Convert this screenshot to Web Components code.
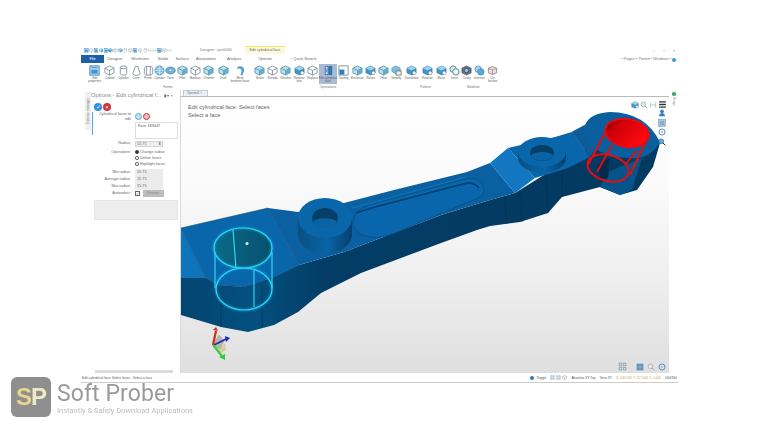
<!DOCTYPE html>
<html>
<head>
<meta charset="utf-8">
<title>Edit cylindrical face</title>
<style>
html, body { margin: 0; padding: 0; background: #fff; }
body { width: 761px; height: 427px; overflow: hidden; font-family: "Liberation Sans", Arial, sans-serif; position: relative; }
</style>
</head>
<body>
<app-window>
  <title-bar></title-bar>
  <ribbon-tabs></ribbon-tabs>
  <ribbon-bar>
    <ribbon-group label="Forms" style="--pad:3px">
      <ribbon-tool w="15.5" icon="sheet">Edit<br>properties</ribbon-tool>
      <ribbon-tool w="14.5" icon="cube">Cuboid</ribbon-tool>
      <ribbon-tool w="13" icon="cyl">Cylinder</ribbon-tool>
      <ribbon-tool w="12" icon="cone">Cone</ribbon-tool>
      <ribbon-tool w="12" icon="prism">Prism</ribbon-tool>
      <ribbon-tool w="11" icon="ball">Cylinder</ribbon-tool>
      <ribbon-tool w="11" icon="torus">Torus</ribbon-tool>
      <ribbon-tool w="12.5" icon="tcube">Fillet</ribbon-tool>
      <ribbon-tool w="13.5" icon="cube">Boolean</ribbon-tool>
      <ribbon-tool w="13.5" icon="tcube">Chamfer</ribbon-tool>
      <ribbon-tool w="15.5" icon="tcube">Draft</ribbon-tool>
      <ribbon-tool w="18" icon="wizard">Mesh<br>between faces</ribbon-tool>
    </ribbon-group>
    <ribbon-group label="Operations" style="--pad:4px">
      <ribbon-tool w="13.5" icon="tcube">Shave</ribbon-tool>
      <ribbon-tool w="12.5" icon="cube">Extrude</ribbon-tool>
      <ribbon-tool w="13.5" icon="tcube">Revolve</ribbon-tool>
      <ribbon-tool w="13.5" icon="bcube">Remove<br>face</ribbon-tool>
      <ribbon-tool w="13" icon="cube">Replace</ribbon-tool>
      <ribbon-tool w="18" icon="edit" active>Edit cylindrical<br>face</ribbon-tool>
      <ribbon-tool w="13.5" icon="scale">Scaling</ribbon-tool>
      <ribbon-tool w="14" icon="tcube">Enclosure</ribbon-tool>
      <ribbon-tool w="12.5" icon="bcube">Rotate</ribbon-tool>
      <ribbon-tool w="12.5" icon="tcube">Offset</ribbon-tool>
      <ribbon-tool w="13.5" icon="simp">Simplify</ribbon-tool>
    </ribbon-group>
    <ribbon-group label="Pattern">
      <ribbon-tool w="17" icon="bcube">Translation</ribbon-tool>
      <ribbon-tool w="14.5" icon="bcube">Rotation</ribbon-tool>
      <ribbon-tool w="13.5" icon="bcube">Mirror</ribbon-tool>
    </ribbon-group>
    <ribbon-group label="Boolean">
      <ribbon-tool w="12.5" icon="unite">Unite</ribbon-tool>
      <ribbon-tool w="12.5" icon="cavity">Cavity</ribbon-tool>
      <ribbon-tool w="13" icon="inter">Intersect</ribbon-tool>
      <ribbon-tool w="13" icon="cut">Cut<br>Section</ribbon-tool>
    </ribbon-group>
  </ribbon-bar>
  <work-area>
    <options-panel slot="left"></options-panel>
    <scene-view slot="main"></scene-view>
    <side-strip slot="right"></side-strip>
  </work-area>
  <status-bar></status-bar>
</app-window>
<soft-mark></soft-mark>

<script>
const ICONS = {
  sheet: '<rect x="1" y="1" width="10" height="10" fill="#cfe3f3" stroke="#2c7fc0" stroke-width="1"/><rect x="2.5" y="5" width="7" height="4.5" fill="#3f97d6"/><path d="M2.5 3h7" stroke="#2c7fc0"/>',
  cube: '<path d="M6 1 11 3.5V8.5L6 11 1 8.5V3.5ZM1 3.5 6 6 11 3.5M6 6V11" fill="#fff" stroke="#66808f" stroke-width=".8"/>',
  tcube: '<path d="M6 1 11 3.5V8.5L6 11 1 8.5V3.5Z" fill="#bfe0e8" stroke="#3f8aa5" stroke-width=".8"/><path d="M1 3.5 6 6 11 3.5M6 6V11" fill="none" stroke="#3f8aa5" stroke-width=".8"/><path d="M6 6 11 3.5V8.5L6 11Z" fill="#64aecb"/>',
  bcube: '<path d="M6 1 11 3.5V8.5L6 11 1 8.5V3.5Z" fill="#3f97c9" stroke="#2b6f95" stroke-width=".6"/><path d="M1 3.5 6 6 11 3.5 6 1Z" fill="#9fd0ea"/><circle cx="9" cy="8.6" r="2" fill="#fff" stroke="#557" stroke-width=".5"/>',
  cyl: '<path d="M2.5 2.5V9.5A3.5 1.5 0 0 0 9.500 9.500V2.500" fill="#fff" stroke="#66808f" stroke-width=".8"/><ellipse cx="6" cy="2.500" rx="3.500" ry="1.500" fill="#fff" stroke="#66808f" stroke-width=".8"/>',
  cone: '<path d="M4.500 1.500H7.500L10 9.500A4 1.700 0 0 1 2 9.500Z" fill="#fff" stroke="#66808f" stroke-width=".8"/>',
  prism: '<path d="M3 1.500H9L10.500 3.500V9.500L9 11H3L1.500 9.500V3.500ZM4 1.500V11M8 1.500V11" fill="#fff" stroke="#66808f" stroke-width=".8"/>',
  ball: '<circle cx="6" cy="6" r="5" fill="#7fc0e6" stroke="#3a7ea8" stroke-width=".7"/><path d="M1 6H11M6 1V11M2.500 3C5 4.500 7 4.500 9.500 3M2.500 9C5 7.500 7 7.500 9.500 9" fill="none" stroke="#e8f4fb" stroke-width=".6"/>',
  torus: '<ellipse cx="6" cy="6" rx="5.300" ry="3.800" fill="#6fb0d8" stroke="#4d7f9e" stroke-width=".7"/><ellipse cx="6" cy="5.600" rx="2.200" ry="1.200" fill="#dfeef6" stroke="#4d7f9e" stroke-width=".5"/>',
  wizard: '<path d="M3 2C6 .5 10 2 10 5.500 10 8 8.500 9 8 11.500L6 11C6.500 8.500 7.500 7 7 5.500 6.500 4 5 3.500 3 4Z" fill="#4f9fcb"/><path d="M2 3.500 4 2.500" stroke="#667" stroke-width=".7"/>',
  edit: '<path d="M2.500 1.500H5.500V10.500H2.500Z" fill="#d8e8f4" stroke="#1f5f93" stroke-width=".8"/><path d="M6.500 1.500H9.500V10.500H6.500Z" fill="#2f7fc0" stroke="#1f5f93" stroke-width=".8"/><path d="M4 4V8" stroke="#1f5f93" stroke-width=".8"/>',
  scale: '<rect x="1" y="1" width="10" height="10" fill="#fff" stroke="#5d7685" stroke-width=".8"/><rect x="1.500" y="5" width="5.500" height="5.500" fill="#2b7fbe"/>',
  simp: '<path d="M5 1 10 3.500V7L5 9.500 1 7V3.500Z" fill="#7fbfe0" stroke="#3c83aa" stroke-width=".7"/><rect x="5.500" y="6.500" width="5.500" height="4.500" fill="#eee" stroke="#555" stroke-width=".7"/>',
  unite: '<circle cx="4.500" cy="4.500" r="3.500" fill="#d4ecec" stroke="#3d7f82" stroke-width=".9"/><circle cx="7.500" cy="7.500" r="3.500" fill="#e8f5f5" stroke="#3d7f82" stroke-width=".9"/>',
  cavity: '<path d="M6 1 11 3.500V8.500L6 11 1 8.500V3.500Z" fill="#5d7485" stroke="#3b4b57" stroke-width=".7"/><circle cx="6" cy="6" r="2.300" fill="#9fc0d8" stroke="#26343e" stroke-width=".6"/>',
  inter: '<circle cx="4.500" cy="4.500" r="3.500" fill="#a8d3ea" stroke="#4689b0" stroke-width=".8"/><circle cx="7.500" cy="7.500" r="3.500" fill="#5ea9d5" stroke="#4689b0" stroke-width=".8"/>',
  cut: '<path d="M6 1.500 10.500 3.500V8.500L6 10.500 1.500 8.500V3.500Z" fill="#e9dfdc" stroke="#777" stroke-width=".8"/><path d="M1.500 3.500 6 5.500 10.500 3.500M6 5.500V10.500" fill="none" stroke="#a55" stroke-width=".6"/>',
  hbar: '<path d="M1.500 2.500H10.500M1.500 6H10.500M1.500 9.500H10.500" stroke="#333" stroke-width="1.800"/>',
  frame: '<path d="M2 2V10M10 2V10M2 6H10" stroke="#9aa6ad" stroke-width=".9" fill="none"/>',
  grid: '<path d="M1.500 1.500H5V5H1.500ZM7 1.500H10.500V5H7ZM1.500 7H5V10.500H1.500ZM7 7H10.500V10.500H7Z" fill="none" stroke="#7d97a8" stroke-width="1"/>',
  view: '<rect x="1" y="1" width="10" height="10" fill="#5f93bd"/><path d="M1 6H11M6 1V11" stroke="#a9cbe4" stroke-width=".7"/>',
  person: '<circle cx="6" cy="3.500" r="2.800" fill="#2f7fc0"/><path d="M1.500 11C1.500 7 4 6 6 6S10.500 7 10.500 11Z" fill="#2f7fc0"/>',
  tile: '<rect x="1" y="1" width="10" height="10" fill="#a9c6dc" stroke="#5a8cb2" stroke-width=".8"/><path d="M3 4H9M3 6H9M3 8H9" stroke="#4f82a8" stroke-width=".8"/>',
  zoomv: '<circle cx="5" cy="5" r="3.500" fill="#6ea5cf" stroke="#2b6c9f" stroke-width="1.100"/><path d="M7.500 7.500 11 11" stroke="#222" stroke-width="1.400"/>',
  mag: '<circle cx="5" cy="5" r="3.500" fill="#e4e8ea" stroke="#9aa7ad" stroke-width="1.100"/><path d="M7.500 7.500 11 11" stroke="#8c979c" stroke-width="1.300"/>',
  rot: '<circle cx="6" cy="6" r="4.500" fill="none" stroke="#5c93bd" stroke-width="1.500"/><circle cx="6" cy="6" r="1.800" fill="#a9c9df"/>'
};

class RIcon extends HTMLElement {
  connectedCallback() {
    const s = this.getAttribute('size') || 12;
    const shadow = this.shadowRoot || this.attachShadow({ mode: 'open' });
    shadow.innerHTML = `<style>:host{display:block;width:${s}px;height:${s}px}svg{display:block;width:100%;height:100%}</style>
      <svg viewBox="0 0 12 12">${ICONS[this.getAttribute('name')] || ''}</svg>`;
  }
}
customElements.define('r-icon', RIcon);

class AppWindow extends HTMLElement {
  constructor() {
    super();
    this.attachShadow({ mode: 'open' }).innerHTML = `<style>
      :host{display:flex;flex-direction:column;width:597px;height:337px;margin:46px 0 0 81px;background:#fff;color:#555;filter:blur(.5px);font:4px "Liberation Sans",Arial,sans-serif}
    </style><slot></slot>`;
  }
}
customElements.define('app-window', AppWindow);

class TitleBar extends HTMLElement {
  constructor() {
    super();
    const quick = ['sheet','cube','sheet','tcube','sheet','bcube','cube','tcube','cyl','cube','sheet','cube','cyl','frame','frame','sheet','cube','frame'];
    this.attachShadow({ mode: 'open' }).innerHTML = `<style>
      :host{display:flex;align-items:center;height:9px;position:relative}
      .q{display:flex;gap:.2px;margin-left:3px}
      .ctx{position:absolute;left:164px;top:0;width:40px;height:8px;box-sizing:border-box;background:#fbf8dc;border-top:1px solid #f0e85a;text-align:center;font-size:3.600px;line-height:7px;color:#666}
      .t{position:absolute;left:119px;top:2px;font-size:3.600px;color:#777;white-space:nowrap}
      .w{position:absolute;right:3px;top:2px;display:flex;gap:8px;font-size:4px;color:#777}
    </style>
    <div class="q">${quick.map(n => `<r-icon name="${n}" size="4.700"></r-icon>`).join('')}</div>
    <span class="t">Designer - part0160</span>
    <div class="ctx">Edit cylindrical face</div>
    <div class="w"><span>–</span><span>▫</span><span>×</span></div>`;
  }
}
customElements.define('title-bar', TitleBar);

class RibbonTabs extends HTMLElement {
  constructor() {
    super();
    const tabs = [['Designer',34],['Wireframe',59],['Solids',82],['Surface',101],['Annotations',125],['Analysis',153],['Operate',184]];
    this.attachShadow({ mode: 'open' }).innerHTML = `<style>
      :host{display:block;height:9px;position:relative;font-size:3.800px;line-height:9px;color:#666}
      .file{position:absolute;left:0;top:0;width:23px;height:8px;background:#1f5fa8;color:#fff;text-align:center;line-height:8px}
      span{position:absolute;top:0;transform:translateX(-50%);white-space:nowrap}
      .r{position:absolute;right:2px;top:0;color:#777;white-space:nowrap;display:flex;align-items:center;gap:1px;height:9px}
      .r i{display:block;width:4px;height:4px;border-radius:50%;background:#3f97d6}
    </style><div class="file">File</div>
    ${tabs.map(t => `<span style="left:${t[1]}px">${t[0]}</span>`).join('')}
    <span style="left:222px">♀ Quick Search</span>
    <div class="r">• Pages • Theme • Windows •<i></i></div>`;
  }
}
customElements.define('ribbon-tabs', RibbonTabs);

class RibbonBar extends HTMLElement {
  constructor() {
    super();
    this.attachShadow({ mode: 'open' }).innerHTML = `<style>
      :host{display:flex;height:26px;padding-left:3px;flex:none}
    </style><slot></slot>`;
  }
}
customElements.define('ribbon-bar', RibbonBar);

class RibbonGroup extends HTMLElement {
  constructor() {
    super();
    this.attachShadow({ mode: 'open' }).innerHTML = `<style>
      :host{display:flex;flex-direction:column;height:26px;padding-left:var(--pad,0)}
      .tools{display:flex;height:21px}
      .lab{text-align:center;font-size:3.400px;line-height:5px;color:#777}
    </style><div class="tools"><slot></slot></div><div class="lab"></div>`;
    this.shadowRoot.querySelector('.lab').textContent = this.getAttribute('label');
  }
}
customElements.define('ribbon-group', RibbonGroup);

class RibbonTool extends HTMLElement {
  constructor() {
    super();
    const active = this.hasAttribute('active');
    this.attachShadow({ mode: 'open' }).innerHTML = `<style>
      :host{display:flex;flex-direction:column;align-items:center;flex:none;width:${this.getAttribute('w')}px;height:20px;padding-top:1px;box-sizing:border-box;background:${active ? '#a9bad2' : 'none'}}
      .lab{font-size:2.900px;line-height:3.200px;text-align:center;white-space:nowrap;color:#5d5d5d;margin-top:1px}
    </style><r-icon name="${this.getAttribute('icon')}" size="11"></r-icon><div class="lab"><slot></slot></div>`;
  }
}
customElements.define('ribbon-tool', RibbonTool);

class WorkArea extends HTMLElement {
  constructor() {
    super();
    this.attachShadow({ mode: 'open' }).innerHTML = `<style>
      :host{display:grid;grid-template-columns:100px 488px 9px;flex:1;min-height:0}
      ::slotted(*){min-width:0}
    </style><slot name="left"></slot><slot name="main"></slot><slot name="right"></slot>`;
  }
}
customElements.define('work-area', WorkArea);

class FormRow extends HTMLElement {
  constructor() {
    super();
    this.attachShadow({ mode: 'open' }).innerHTML = `<style>
      :host{display:grid;grid-template-columns:39px 1fr;column-gap:4px;align-items:center;font-size:3.800px;color:#666;min-height:var(--h,7px)}
      .l{text-align:right;line-height:4.200px}
    </style><div class="l"></div><div><slot></slot></div>`;
    this.shadowRoot.querySelector('.l').innerHTML = this.getAttribute('label') || '';
  }
}
customElements.define('form-row', FormRow);

class OptionsPanel extends HTMLElement {
  constructor() {
    super();
    const val = v => `<div class="val">${v}</div>`;
    this.attachShadow({ mode: 'open' }).innerHTML = `<style>
      :host{display:grid;grid-template-columns:10px 1fr;background:#fff;border-right:1px solid #d9d9d9;box-sizing:border-box;position:relative}
      .tabv{writing-mode:vertical-rl;transform:rotate(180deg);font-size:3.400px;color:#777;background:#eef0f2;height:38px;width:6px;margin:2px 0 0 4px;text-align:center;line-height:6px;overflow:hidden;white-space:nowrap}
      .body{display:flex;flex-direction:column;min-width:0}
      .head{display:flex;align-items:center;height:10px;font-size:5.800px;color:#8a8a8a;white-space:nowrap}
      .head i{font-style:normal;margin-left:3px;font-size:4px;color:#555}
      .btns{display:flex;gap:1px;margin:3px 0 0 3px}
      .b{width:8px;height:8px;border-radius:50%;color:#fff;font-size:6px;line-height:8px;text-align:center}
      .form{display:flex;flex-direction:column;padding-left:0;margin-top:1px;border-left:1px solid transparent;position:relative}
      .accent{position:absolute;left:0;top:0;width:1px;height:23px;background:#57a6dc}
      .circ{display:flex;gap:1px}
      .c{width:7px;height:7px;border-radius:50%;box-sizing:border-box}
      .list{width:43px;height:17px;box-sizing:border-box;border:1px solid #ddd;padding:1px 2px;font-size:3.800px;color:#555;margin:1px 0;background:#fff}
      .num{display:flex;justify-content:space-between;width:28px;height:6px;box-sizing:border-box;border:1px solid #d4d4d4;padding:0 1px;line-height:4.500px;font-size:3.800px;background:#eee}
      .val{width:28px;height:7px;background:#ececec;line-height:7px;padding-left:2px;box-sizing:border-box;font-size:3.800px}
      .rad{display:flex;align-items:center;gap:1.500px;height:6px;font-size:3.800px;color:#666;white-space:nowrap}
      .rad b{width:3.500px;height:3.500px;border-radius:50%;border:.7px solid #444;display:block;box-sizing:border-box}
      .rad b.on{background:#333}
      .auto{display:flex;align-items:center;gap:3px}
      .chk{width:4.500px;height:4.500px;border:.7px solid #666;box-sizing:border-box;font-size:4px;line-height:3.500px;text-align:center}
      .btn{width:21px;height:7px;background:#bdbdbd;color:#888;text-align:center;line-height:7px;font-size:3.400px}
      .gray{height:20px;background:#eeeeee;margin:3px 2px 0 2px;border:1px solid #e4e4e4;box-sizing:border-box}
      .scroll{position:absolute;left:14px;right:7px;bottom:0;height:3px;background:#dbdbdb}
    </style>
    <div class="tabv">Options manager</div>
    <div class="body">
      <div class="head">Options - Edit cylindrical f...<i>▮ ▾ ×</i></div>
      <div class="btns"><div class="b" style="background:#2f8fdc">✓</div><div class="b" style="background:#d3323a">×</div></div>
      <div class="form">
        <div class="accent"></div>
        <form-row label="Cylindrical faces to<br>edit" style="--h:9px"><div class="circ"><div class="c" style="background:#bfe0f2;border:1px solid #66a9d2"></div><div class="c" style="background:#f0b9bd;border:1px solid #c33"></div></div></form-row>
        <form-row><div class="list">Face 183047</div></form-row>
        <form-row label="Radius:"><div class="num"><span>15.75</span><span>⬍</span></div></form-row>
        <form-row label="Operations:" style="--h:6px;margin-top:2px"><div class="rad"><b class="on"></b>Change radius</div></form-row>
        <form-row style="--h:6px"><div class="rad"><b></b>Delete faces</div></form-row>
        <form-row style="--h:6px"><div class="rad"><b></b>Highlight faces</div></form-row>
        <form-row label="Min radius:" style="margin-top:2px">${val('15.75')}</form-row>
        <form-row label="Average radius:">${val('15.75')}</form-row>
        <form-row label="Max radius:">${val('15.75')}</form-row>
        <form-row label="Autoselect:"><div class="auto"><div class="chk">✓</div><div class="btn">Preview</div></div></form-row>
        <div class="gray"></div>
      </div>
    </div>
    <div class="scroll"></div>`;
  }
}
customElements.define('options-panel', OptionsPanel);

class SceneView extends HTMLElement {
  constructor() {
    super();
    const top = ['bcube','mag','frame'].map(n => `<r-icon name="${n}" size="8"></r-icon>`).join('');
    const side = ['person','tile','rot','zoomv'].map(n => `<r-icon name="${n}" size="8"></r-icon>`).join('');
    const bot = ['view','mag','rot'].map(n => `<r-icon name="${n}" size="8"></r-icon>`).join('');
    this.attachShadow({ mode: 'open' }).innerHTML = `<style>
      :host{display:flex;flex-direction:column;min-height:0}
      .tab{height:7px;display:flex;align-items:flex-end;border-bottom:1px solid #b9b9b9;box-sizing:border-box;padding-left:2px}
      .tab span{display:block;height:6px;width:25px;background:#eaf2f8;border:.5px solid #bcd;border-bottom:0;font-size:3px;line-height:5px;padding-left:3px;box-sizing:border-box;color:#567}
      .view{flex:1;position:relative;min-height:0;background:linear-gradient(#fff 0,#fbfbfb 30%,#efefef 65%,#dfdfdf 100%);overflow:hidden}
      svg.part{position:absolute;left:0;top:0;width:488px;height:276px}
      .cap{position:relative;padding:7px 0 0 7px;font-size:5.600px;line-height:7.500px;color:#666}
      .tb{position:absolute;display:flex;align-items:center}
      .tb.top{right:2px;top:3px;gap:1px}
      .tb.side{right:3px;top:12px;flex-direction:column;gap:1.500px}
      .tb.bot{right:3px;bottom:2px;gap:3px}
      .g{position:absolute;right:42px;bottom:2px}
    </style>
    <div class="tab"><span>Operate1 ×</span></div>
    <div class="view">
      <svg class="part" viewBox="181 97 488 276">
        <defs>
          <linearGradient id="side" x1="0" y1="0" x2="1" y2="0"><stop offset="0" stop-color="#034570"/><stop offset=".15" stop-color="#04507f"/><stop offset=".3" stop-color="#033d66"/><stop offset=".7" stop-color="#033a62"/><stop offset="1" stop-color="#033a60"/></linearGradient>
          <linearGradient id="boss" x1="0" y1="0" x2="1" y2="0"><stop offset="0" stop-color="#094f80"/><stop offset=".55" stop-color="#0a64a6"/><stop offset="1" stop-color="#053f6b"/></linearGradient>
          <linearGradient id="red" x1="0" y1="0" x2="1" y2=".4"><stop offset="0" stop-color="#7a0006"/><stop offset=".35" stop-color="#d00008"/><stop offset="1" stop-color="#ff0a10"/></linearGradient>
          <linearGradient id="cuptop" x1="0" y1="0" x2="1" y2="0"><stop offset="0" stop-color="#0b6a88"/><stop offset="1" stop-color="#07506f"/></linearGradient>
          <filter id="soft" x="-10%" y="-10%" width="120%" height="120%"><feGaussianBlur stdDeviation=".4"/></filter>
          <filter id="glow" x="-10%" y="-10%" width="120%" height="120%"><feGaussianBlur stdDeviation="1"/></filter>
        </defs>
        <!-- dark underside of the whole part -->
        <path fill="url(#side)" d="M181,278 L181,315 L221,327 L248,332 L274,325 L298,312 L321,293 L361,273 L441,243 L477,230 L490,226 L520,222 L548,213 L562,197 L600,187 L620,195 L637,190 L653,167 L660,143 L600,140 L515,193 L490,200 L441,215 L344,252 L299,265 L274,277 L244,287 L218,285 L206,278 Z"/>
        <path fill="none" stroke="#022e4f" stroke-width=".5" d="M221,298 V327M262,286 V328M505,198 L507,224M520,195 L522,222M546,178 L548,213M562,172 L562,197"/>
        <!-- top faces -->
        <path fill="#0a60a0" d="M268,208 L298,212 L344,203 L394,190 L467,172 L490,163 L515,193 L490,200 L441,215 L344,252 L299,265 Z"/>
        <path fill="#0e74bb" d="M181,228 L206,278 L181,278 Z"/>
        <path fill="#0a66ab" stroke="#04406c" stroke-width=".5" d="M181,228 L268,208 L299,265 L274,277 L244,287 L218,285 L206,278 Z"/>
        <path fill="#1277c0" d="M490,163 L508,148 L535,178 L515,193 Z"/>
        <path fill="#0a66ab" d="M508,148 L555,137 L572,132 L590,157 L568,168 L535,178 Z"/>
        <path fill="#0a5d9a" stroke="#04406c" stroke-width=".4" d="M572,132 L585,125 L602,142 L590,157 Z"/>
        <!-- slot -->
        <path fill="#0a66ac" stroke="#0a4a7a" stroke-width=".7" d="M353,222 Q354,210 372,204 L466,179 Q480,176 484,188 Q485,195 478,198 L392,234 Q375,240 362,235 Q352,230 353,222 Z"/>
        <path fill="none" stroke="#04406e" stroke-width="1.600" d="M356,213 L375,207 L463,184 Q474,181 479,188"/>
        <path fill="none" stroke="#0f7fc8" stroke-width=".8" d="M352,208 L375,202 L466,177"/>
        <!-- left boss -->
        <path fill="url(#boss)" d="M298,218 V234 A27,20 0 0 0 352,234 V218 Z"/>
        <ellipse cx="325" cy="218" rx="27" ry="20" fill="#0a66ab"/>
        <ellipse cx="325" cy="218" rx="13" ry="10" fill="#053f68"/>
        <path d="M313,222 A13,10 0 0 0 337,222 A13,6 0 0 0 313,222Z" fill="#0a64a3"/>
        <!-- middle boss -->
        <path fill="url(#boss)" d="M518,152 V158 A24,15 0 0 0 566,158 V152 Z"/>
        <ellipse cx="542" cy="152" rx="24" ry="15" fill="#0a66ab"/>
        <ellipse cx="542" cy="153" rx="12" ry="8" fill="#053f68"/>
        <path d="M531,156 A12,8 0 0 0 553,156 A11,4 0 0 0 531,156Z" fill="#0a64a3"/>
        <!-- head -->
        <path fill="#05558a" d="M608,172 L642,158 L632,190 L620,195 L600,187 Z"/>
        <path fill="#0a5f9f" d="M585,125 Q590,113 610,112 Q645,112 660,142 Q650,160 630,158 Q606,158 590,145 Z"/>
        <path fill="#032c4c" d="M597,165 L610,158 L608,178 L601,182 Z"/>
        <ellipse cx="627" cy="133" rx="22" ry="14" transform="rotate(10 627 133)" fill="url(#red)"/>
        <g fill="none" stroke="#e30b12" stroke-width="2" filter="url(#soft)">
          <ellipse cx="627" cy="133" rx="22" ry="14" transform="rotate(10 627 133)"/>
          <ellipse cx="608" cy="168" rx="21" ry="13" transform="rotate(15 608 168)"/>
          <path d="M605,133 L588,165M648,137 L630,175M612,145 L597,172M637,150 L626,164"/>
        </g>
        <!-- cyan selected cylinder -->
        <ellipse cx="243" cy="248" rx="29" ry="20" fill="url(#cuptop)"/>
        <g fill="none" stroke="#12b8f0" stroke-width="2.200" filter="url(#glow)" opacity=".6">
          <ellipse cx="243" cy="248" rx="29" ry="20"/>
          <ellipse cx="244" cy="289" rx="28" ry="21"/>
        </g>
        <g fill="none" stroke="#2fd6f6" stroke-width="1.200" filter="url(#soft)">
          <ellipse cx="243" cy="248" rx="29" ry="20"/>
          <ellipse cx="244" cy="289" rx="28" ry="21"/>
          <path d="M215,252 V288M272,252 V288M233,230 L236,268M254,270 V307"/>
        </g>
        <circle cx="247" cy="243.500" r="1.600" fill="#cfeaf5"/>
        <!-- axis triad -->
        <path d="M213,345 L219,335 L224,341 L220,349Z" fill="#b9b6a6" stroke="#888" stroke-width=".4"/>
        <path d="M213,345 L220,349 L225,343 L226,350 L219,354Z" fill="#cfc88e" opacity=".8"/>
        <path d="M213,345 L216,331" stroke="#c9301c" stroke-width="2.200"/><path d="M213,330 L218,331 L216,327Z" fill="#dd2b18"/>
        <path d="M214,345 L226,339" stroke="#1a2bc4" stroke-width="1.800"/><path d="M225,336 L230,338 L226,342Z" fill="#1a2bc4"/>
        <path d="M213,345 L222,356" stroke="#35d045" stroke-width="2.200"/><path d="M219,357 L225,354 L225,360Z" fill="#2fc93e"/>
      </svg>
      <div class="cap">Edit cylindrical face: Select faces<br>Select a face</div>
      <div class="tb top">${top}<r-icon name="hbar" size="9"></r-icon></div>
      <div class="tb side">${side}</div>
      <div class="g"><r-icon name="grid" size="9"></r-icon></div>
      <div class="tb bot">${bot}</div>
    </div>`;
  }
}
customElements.define('scene-view', SceneView);

class SideStrip extends HTMLElement {
  constructor() {
    super();
    this.attachShadow({ mode: 'open' }).innerHTML = `<style>
      :host{display:block;background:#fff;position:relative;padding:2px 0 0 2px}
      .d{width:3.500px;height:3.500px;border-radius:50%;background:#3aa66a;margin-left:1px}
      .v{writing-mode:vertical-rl;font-size:3.600px;color:#777;margin-top:1px;line-height:5px}
    </style><div class="d"></div><div class="v">Snap</div>`;
  }
}
customElements.define('side-strip', SideStrip);

class StatusBar extends HTMLElement {
  constructor() {
    super();
    this.attachShadow({ mode: 'open' }).innerHTML = `<style>
      :host{display:flex;align-items:center;height:10px;flex:none;font-size:3.300px;color:#555;white-space:nowrap;padding-left:1px;border-bottom:1px solid #ccc;box-sizing:border-box}
      .r{margin-left:auto;display:flex;align-items:center;gap:4px;padding-right:1px;font-size:3.300px}
      .dot{width:4px;height:4px;border-radius:50%;background:#2a78c0;margin-right:-1px}
      .ic{display:flex;gap:1px}
      .y{color:#b9a83d;width:45px;overflow:hidden}
    </style>
    <span>Edit cylindrical face: Select faces - Select a face</span>
    <div class="r"><span class="dot"></span><span>Toggle</span>
      <span class="ic"><r-icon name="grid" size="5"></r-icon><r-icon name="grid" size="5"></r-icon><r-icon name="cube" size="5"></r-icon></span>
      <span>Absolute XY Top</span><span>View XY</span><span class="y">X: 240.532 Y: 117.041 Z: 0.000</span><span>000/200</span></div>`;
  }
}
customElements.define('status-bar', StatusBar);

class SoftMark extends HTMLElement {
  constructor() {
    super();
    this.attachShadow({ mode: 'open' }).innerHTML = `<style>
      :host{position:absolute;left:11px;top:377px;display:flex;gap:6px;filter:blur(.4px)}
      .logo{width:40px;height:40px;border-radius:6px;background:#8f8f8f;color:#e9d68e;font:bold 24px/40px "Liberation Sans",Arial,sans-serif;text-align:center;letter-spacing:-1px}
      .logo i{font-style:normal;color:#efe9c8}
      .t{padding-top:5px}
      .n{font:23px/23px Roboto,"Liberation Sans",sans-serif;color:#9a9a9a;letter-spacing:.1px}
      .s{font:7.500px/10px Roboto,"Liberation Sans",sans-serif;color:#bdbdbd;margin-top:1px;white-space:nowrap}
    </style>
    <div class="logo">S<i>P</i></div>
    <div class="t"><div class="n">Soft Prober</div><div class="s">Instantly &amp; Safely Download Applications</div></div>`;
  }
}
customElements.define('soft-mark', SoftMark);
</script>
</body>
</html>
